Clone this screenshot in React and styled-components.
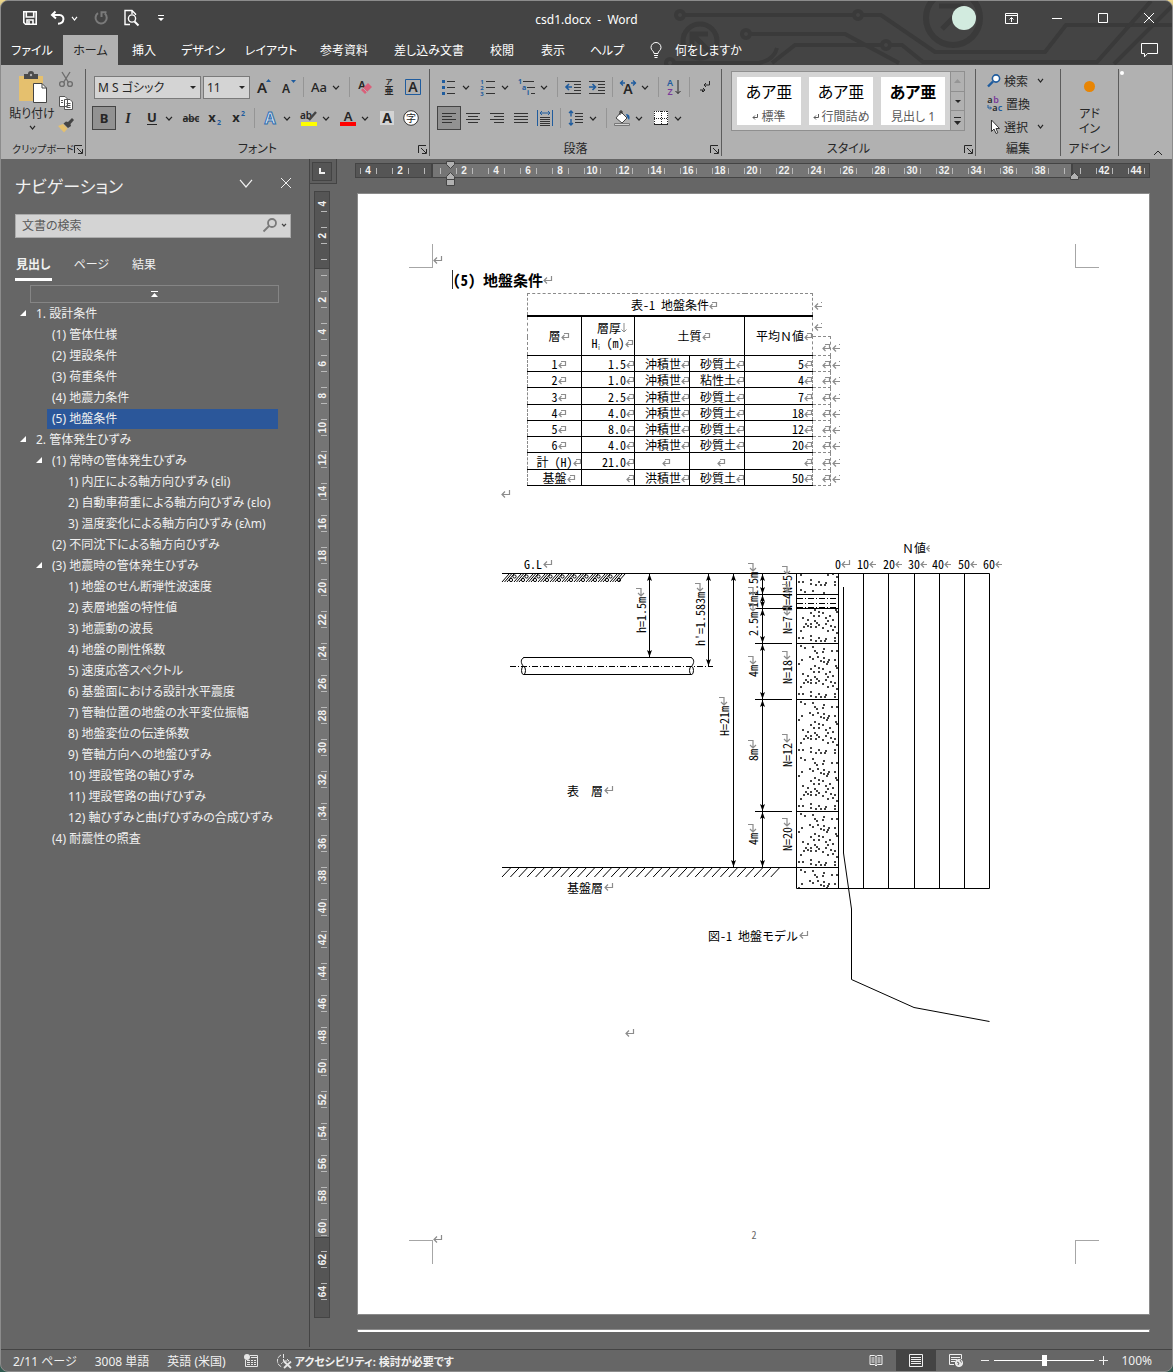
import { Fragment } from 'react'
import styled, { createGlobalStyle, css } from 'styled-components'

const GlobalStyle = createGlobalStyle`
    * { box-sizing: border-box; }
    body {
        margin: 0;
        background: linear-gradient(180deg, #f0d98a 0, #8a8a8a 20px, #8a8a8a 95%, #2f5a50 100%);
        font-family: 'Noto Sans', 'Noto Sans CJK JP', sans-serif;
        font-size: 12px;
        font-feature-settings: 'palt';
    }
    button, input, select {
        font: inherit;
        font-feature-settings: inherit;
        color: inherit;
        margin: 0;
        padding: 0;
        border: 0;
        background: none;
    }
    a { color: inherit; text-decoration: none; }
    svg { display: block; flex: none; overflow: visible; }
`

/* ---------- window and title bar ---------- */

const Window = styled.div`
    display: flex;
    flex-direction: column;
    min-height: 100vh;
    border: 1px solid #8c8c8c;
    border-radius: 8px;
    overflow: hidden;
    background: #666666;
    color: #f0f0f0;
`

const Header = styled.header`
    position: relative;
    background: #444444;
    color: #ffffff;
`

const Circuit = styled.svg`
    position: absolute;
    top: 0;
    right: 0;
    overflow: hidden;
    pointer-events: none;
`

const TitleBar = styled.div`
    position: relative;
    display: grid;
    grid-template-columns: 1fr auto 1fr;
    align-items: center;
    height: 34px;
`

const QuickAccess = styled.div`
    display: flex;
    align-items: center;
    padding-left: 20px;
`

const TitleButton = styled.button`
    display: flex;
    align-items: center;
    justify-content: center;
    gap: 5px;
    width: ${p => p.$w || 24}px;
    height: 30px;
`

const DocTitle = styled.div`
    white-space: pre;
    line-height: 16px;
    padding-top: 3px;
`

const WindowButtons = styled.div`
    display: flex;
    justify-content: flex-end;
    align-items: center;
`

const Avatar = styled.div`
    width: 24px;
    height: 24px;
    margin-right: 12px;
    border-radius: 50%;
    background: #d2ebdf;
`

const TabBar = styled.nav`
    position: relative;
    display: flex;
    height: 30px;
`

const RibbonTab = styled.a`
    display: flex;
    align-items: center;
    justify-content: center;
    width: ${p => p.$w}px;
    white-space: nowrap;
    ${p => p.$active && css`
        background: #b1b1b1;
        color: #262626;
    `}
`

const TellMe = styled.button`
    display: flex;
    align-items: center;
    gap: 13px;
    margin-left: 14px;
`

const CommentButton = styled.button`
    margin-left: auto;
    padding: 0 14px;
`

/* ---------- ribbon ---------- */

const Ribbon = styled.div`
    display: flex;
    height: 94px;
    padding: 4px 0 3px;
    background: #b1b1b1;
    color: #262626;
`

const Group = styled.section`
    display: flex;
    flex-direction: column;
    justify-content: space-between;
    width: ${p => p.$w}px;
    ${p => p.$grow && 'flex: 1;'}
    border-right: 1px solid #5c5c5c;
`

const GroupBody = styled.div`
    display: flex;
    flex-direction: ${p => p.$dir || 'column'};
    padding: ${p => p.$pad || '7px 0 0 7px'};
    gap: ${p => p.$gap || 0}px;
`

const GroupFoot = styled.div`
    display: grid;
    grid-template-columns: 1fr auto 1fr;
    align-items: center;
    line-height: 14px;
    height: 14px;
    padding: 0 2px;
    font-size: ${p => p.$small ? 10 : 12}px;
    white-space: nowrap;
`

const Launcher = styled.button`
    justify-self: end;
`

const ToolRow = styled.div`
    display: flex;
    align-items: center;
    height: 24px;
    padding-left: ${p => p.$inset || 0}px;
`

const Tool = styled.button`
    display: flex;
    align-items: center;
    justify-content: center;
    width: 24px;
    height: 24px;
    ${p => p.$active && css`
        background: #929292;
        border: 1px solid #444444;
    `}
`

const SplitTool = styled.button`
    display: grid;
    grid-template-columns: 18px 16px;
    justify-items: center;
    align-items: center;
    width: 39px;
    height: 24px;
    padding-left: 3px;
`

const Sep = styled.span`
    width: 1px;
    height: 20px;
    margin: 0 3px;
    background: #959595;
`

const SelectBox = styled.label`
    position: relative;
    width: ${p => p.$w}px;
    height: 23px;
    margin-right: 2px;
    border: 1px solid #7a7a7a;
    background: #d4d4d4;
    svg {
        position: absolute;
        right: 4px;
        top: 9px;
        pointer-events: none;
    }
    select {
        appearance: none;
        width: 100%;
        height: 21px;
        padding-left: 3px;
    }
`

const Paste = styled.button`
    display: flex;
    flex-direction: column;
    align-items: center;
    width: 50px;
    line-height: 16px;
    gap: 3px;
    white-space: nowrap;
`

const SmallStack = styled.div`
    display: flex;
    flex-direction: column;
    gap: 7px;
`

const Gallery = styled.div`
    display: flex;
    height: 60px;
    border: 1px solid #8f8f8f;
    background: #d4d4d4;
`

const Cards = styled.div`
    display: flex;
    gap: 8px;
    padding: 5px;
`

const StyleCard = styled.button`
    display: flex;
    flex-direction: column;
    align-items: center;
    justify-content: space-between;
    width: 64px;
    height: 48px;
    padding: 4px 0 1px;
    background: #ffffff;
    color: #000000;
    strong {
        font-size: 16px;
        line-height: 22px;
        font-weight: ${p => p.$bold ? 700 : 400};
    }
    span {
        display: flex;
        align-items: center;
        gap: 3px;
        color: #5a5a5a;
        line-height: 14px;
        white-space: nowrap;
    }
`

const GalleryScroll = styled.div`
    display: flex;
    flex-direction: column;
    width: 14px;
    border-left: 1px solid #8f8f8f;
    background: #b1b1b1;
    button {
        display: flex;
        flex: 1;
        align-items: center;
        justify-content: center;
    }
    button + button { border-top: 1px solid #8f8f8f; }
`

const EditRow = styled.button`
    display: flex;
    align-items: center;
    gap: 3px;
    height: 23px;
    svg:last-child:not(:first-child) { margin-left: 6px; }
`

const AddIn = styled.button`
    display: flex;
    flex-direction: column;
    align-items: center;
    flex: 1;
    line-height: 15px;
    gap: 14px;
    i {
        width: 11px;
        height: 11px;
        border-radius: 50%;
        background: #e88504;
    }
`

const RibbonEnd = styled.div`
    display: flex;
    flex-direction: column;
    justify-content: space-between;
    width: 53px;
    i {
        width: 4px;
        height: 4px;
        margin: 2px 0 0 1px;
        border-radius: 50%;
        background: #ffffff;
    }
    button { align-self: flex-end; margin-right: 9px; }
`

/* ---------- navigation pane ---------- */

const Workspace = styled.div`
    display: flex;
    flex: 1;
`

const NavPane = styled.aside`
    width: 309px;
    margin-bottom: 2px;
    padding: 13px 18px 0 14px;
    border-right: 1px solid #444444;
`

const NavHead = styled.div`
    display: flex;
    align-items: center;
    h2 {
        flex: 1;
        margin: 0;
        font-size: 17px;
        font-weight: 400;
        line-height: 30px;
    }
    button { padding: 0 0 8px; margin-left: 28px; }
`

const SearchBox = styled.div`
    display: flex;
    align-items: center;
    gap: 3px;
    height: 24px;
    margin-top: 12px;
    padding: 0 3px 2px 6px;
    border: 1px solid #ababab;
    background: #d4d4d4;
    color: #444444;
    input {
        flex: 1;
        min-width: 0;
        outline: none;
    }
    input::placeholder { color: #5a5a5a; opacity: 1; }
`

const NavTabs = styled.div`
    display: flex;
    gap: 21px;
    margin-top: 17px;
`

const NavTab = styled.button`
    height: 26px;
    padding: 0 1px 4px;
    border-bottom: 3px solid ${p => p.$active ? '#ffffff' : 'transparent'};
    font-weight: ${p => p.$active ? 700 : 400};
    line-height: 16px;
`

const JumpTop = styled.button`
    display: flex;
    align-items: center;
    justify-content: center;
    width: 249px;
    height: 18px;
    margin: 4px 0 0 15px;
    border: 1px solid #858585;
`

const Tree = styled.ul`
    margin: 0;
    padding: 0;
    list-style: none;
`

const TreeItem = styled.li`
    display: flex;
    align-items: center;
    height: 21px;
    padding-left: ${p => p.$level * 16 - 11}px;
    margin-right: 13px;
    white-space: nowrap;
    svg { width: 11px; }
    a {
        flex: 1;
        margin-left: ${p => p.$open ? 0 : 11}px;
        padding-left: 5px;
        line-height: 20px;
        ${p => p.$selected && 'background: #2b579a;'}
    }
`

/* ---------- rulers and paper ---------- */

const DocArea = styled.main`
    display: flex;
    flex-direction: column;
    flex: 1;
    min-width: 0;
`

const RulerRow = styled.div`
    display: flex;
    align-items: flex-start;
`

const TabSelector = styled.button`
    width: 27px;
    height: 25px;
    padding: 2px;
    border: solid #444444;
    border-width: 0 1px 1px 0;
    background: #5e5e5e;
    span {
        display: flex;
        align-items: center;
        justify-content: center;
        width: 20px;
        height: 19px;
        border: 1px solid #444444;
        background: #555555;
    }
`

const HRuler = styled.div`
    position: relative;
    flex: 1;
    display: flex;
    height: 15px;
    min-width: 0;
    margin: 4px 22px 0 18px;
    padding-left: 4px;
    border: 1px solid #444444;
    background: linear-gradient(90deg, #555555 75px, #444444 75px, #444444 77px, #757575 77px,
        #757575 calc(100% - 78px), #444444 calc(100% - 78px), #444444 calc(100% - 76px), #555555 calc(100% - 76px));
`

const Marker = styled.svg`
    position: absolute;
    top: -3px;
    ${p => p.$right ? 'right: 70px;' : 'left: 90px;'}
`

const HCell = styled.span`
    display: flex;
    flex: none;
    align-items: center;
    justify-content: center;
    width: 16px;
    height: 13px;
    background: linear-gradient(#b9b9b9, #b9b9b9) 0 4px / 1px 6px no-repeat;
    font: bold 10px 'Liberation Sans', sans-serif;
`

const Desk = styled.div`
    display: flex;
    align-items: flex-start;
    flex: 1;
`

const VRuler = styled.div`
    width: 16px;
    margin: 7px 27px 0 4px;
    padding: 4px 0 17px;
    border: 1px solid #444444;
    background: linear-gradient(180deg, #555555 76px, #444444 76px, #444444 77px, #757575 77px,
        #757575 calc(100% - 80px), #444444 calc(100% - 80px), #444444 calc(100% - 79px), #555555 calc(100% - 79px));
`

const VCell = styled.span`
    display: flex;
    align-items: center;
    justify-content: center;
    width: 14px;
    height: 16px;
    background: linear-gradient(#b9b9b9, #b9b9b9) 6px 100% / 6px 1px no-repeat;
    font: bold 10px 'Liberation Sans', sans-serif;
    writing-mode: vertical-rl;
    b { transform: rotate(180deg); }
`

const Pages = styled.div`
    display: flex;
    flex-direction: column;
    align-self: stretch;
    flex: 1;
    min-width: 0;
    margin: 9px 22px 17px 0;
`

const Paper = styled.article`
    display: flex;
    flex-direction: column;
    flex: 1;
    padding: 50px 50px 50px 51px;
    border: 1px solid #8a8a8a;
    background: #ffffff;
    color: #000000;
    font-family: 'Noto Sans CJK JP', sans-serif;
    font-feature-settings: 'hwid';
`

const NextPaper = styled.div`
    height: 3px;
    margin-top: 14px;
    border: solid #8a8a8a;
    border-width: 1px 1px 0;
    background: #ffffff;
`

const MarginRow = styled.div`
    display: flex;
    align-items: ${p => p.$bottom ? 'flex-end' : 'center'};
    justify-content: space-between;
    ${p => p.$bottom && 'margin-top: auto;'}
`

const Corner = styled.span`
    width: 24px;
    height: 24px;
    border: solid #a6a6a6;
    border-width: ${p => p.$edges};
`

const MarginSide = styled.span`
    display: flex;
    align-items: ${p => p.$top ? 'flex-start' : 'center'};
    width: 48px;
    ${p => p.$end && 'justify-content: flex-end;'}
    svg { margin-top: ${p => p.$top ? -5 : 8}px; }
`

const PageNumber = styled.span`
    padding-bottom: 22px;
    color: #666666;
    font-size: 10px;
    line-height: 14px;
`

const SectionTitle = styled.h1`
    display: flex;
    align-items: center;
    margin: 2px 0 0 43px;
    border-left: 1px solid #333333;
    font-size: 15px;
    font-weight: 700;
    line-height: 19px;
    height: 19px;
`

const Paragraph = styled.p`
    display: flex;
    margin: ${p => p.$m};
`

const SoilTable = styled.table`
    margin: 4px 0 0 118px;
    width: 315px;
    border-collapse: collapse;
    table-layout: fixed;
    line-height: 15px;
    th, td {
        height: 16px;
        padding: 0;
        font-weight: 400;
        border: 1px solid #000000;
        text-align: center;
        white-space: nowrap;
    }
    th, td.mid { padding-left: 8px; }
    th svg, td svg { display: inline-block; }
    sub { font-size: 6px; vertical-align: -2px; line-height: 6px; }
    tr > :first-child { border-left: 1px dashed #8a8a8a; }
    tr.tall td { height: 17px; }
    tr td.num { text-align: right; }
    tr .last { border-right: 1px dashed #8a8a8a; }
    tr th.last { padding-left: 0; text-align: right; font-feature-settings: normal; }
    tr td.side { border: 1px dashed #8a8a8a; text-align: right; }
    tr td.mark { border: 0; padding-left: 1px; text-align: left; }
    tr .title {
        height: 22px;
        border: 1px dashed #8a8a8a;
        border-bottom: 2px solid #000000;
    }
    tr td.gap { height: 21px; }
    tr td.short { height: 19px; }
`

const Figure = styled.svg`
    width: 520px;
    height: 484px;
    margin: 41px 0 0 89px;
    text { font-size: 12px; fill: #000000; white-space: pre; }
    text.wide { font-feature-settings: normal; }
`

/* ---------- status bar ---------- */

const StatusBar = styled.footer`
    display: flex;
    align-items: center;
    height: 22px;
    padding: 0 20px 0 12px;
    border-top: 1px solid #444444;
    white-space: nowrap;
    span { padding-right: 18px; }
    b { margin-left: 3px; font-size: 11px; font-weight: 700; }
`

const StatusTools = styled.div`
    display: flex;
    align-items: center;
    align-self: stretch;
    margin-left: auto;
`

const ViewButton = styled.button`
    display: flex;
    align-items: center;
    justify-content: center;
    width: 40px;
    align-self: stretch;
    background: ${p => p.$active ? '#444444' : 'none'};
`

const ZoomButton = styled.button`
    width: 18px;
    display: flex;
    justify-content: center;
`

const Zoom = styled.input`
    appearance: none;
    width: 100px;
    height: 20px;
    &::-webkit-slider-runnable-track { height: 1px; background: #ffffff; }
    &::-webkit-slider-thumb {
        appearance: none;
        width: 5px;
        height: 11px;
        margin-top: -5px;
        background: #ffffff;
    }
`

const ZoomLabel = styled.button`
    margin-left: 9px;
`

/* ---------- small drawings ---------- */

const Svg = ({ w = 16, h = 16, children, ...rest }) => (
    <svg width={w} height={h} viewBox={`0 0 ${w} ${h}`} fill="none" stroke="currentColor" aria-hidden="true" {...rest}>{children}</svg>
)

const Chevron = ({ w = 8, h = 5, ...rest }) => <Svg w={w} h={h} strokeWidth="1.2" {...rest}><path d={`M1 .8L${w / 2} ${h - 1}L${w - 1} .8`} /></Svg>

const Caret = ({ up, bar, color = 'currentColor' }) => (
    <Svg w={bar || up ? 7 : 6} h={bar ? 8 : up ? 4 : 3} stroke="none" fill={color}>
        {bar && <path d="M0 0H7V1H0Z" />}
        <path d={up ? 'M0 4L3.5 0L7 4Z' : bar ? 'M0 4L3.5 8L7 4Z' : 'M0 0L3 3L6 0Z'} />
    </Svg>
)

const Return = () => <Svg w={9} h={8} stroke="#8c8c8c" strokeWidth="1.2"><path d="M8.5 0V4.5H1M4 1.5L1 4.5L4 7.5" /></Svg>
const CellMark = () => <Svg w={8} h={9} stroke="#8c8c8c" strokeWidth="1.2"><path d="M3 1.5H7.5V5.5H1M3.5 3L1 5.5L3.5 8" /></Svg>
const RowMark = () => <Svg w={8} h={8} stroke="#8c8c8c" strokeWidth="1.2"><path d="M8 4.5H1M4 1.5L1 4.5L4 7.5M7 .5H8" /></Svg>
const LineMark = () => <Svg w={6} h={10} stroke="#8c8c8c"><path d="M3 0V9M.5 6.5L3 9L5.5 6.5" /></Svg>

const Letter = ({ x = 8, y = 13, size = 14, weight = 400, fill = '#262626', children, ...rest }) => (
    <text x={x} y={y} fontSize={size} fontWeight={weight} fill={fill} stroke="none" textAnchor="middle" {...rest}>{children}</text>
)

const LauncherIcon = () => <Svg w={9} h={9}><path d="M.5 8V.5H8M3 3L8 8M8.5 4V8.5H4" /></Svg>

const Lines = ({ rows, stroke = '#333333' }) => <path stroke={stroke} d={rows.map(([y, a, b]) => `M${a} ${y}.5H${b}`).join('')} />

const blue = '#1f5c9e'

const Save = () => <Svg strokeWidth="1.6"><path d="M1.8 1.8H14.2V14.2H3.5L1.8 12.5ZM4.3 2V7H11.7V2M5 14V10H11V14M7 11V14" /></Svg>
const Undo = () => <Svg strokeWidth="2"><path d="M5.5 1.5L2 5L6 8.5M2.5 5H9.5C15 5 15 13.5 8 13.8" /></Svg>
const Redo = () => <Svg stroke="#7a7a7a" strokeWidth="2"><path d="M5 3.2A5.6 5.6 0 1 0 11.8 3.6M8.5 7V2.2H13.5" /></Svg>
const Preview = () => <Svg w={17} h={18} strokeWidth="1.4"><path d="M7 15.5H2V1.5H9L12.5 5V6M9 1.5V5" /><circle cx="9" cy="9.5" r="3.6" /><path d="M11.5 12.5L15.5 16.5" strokeWidth="2" /></Svg>
const RibbonOptions = () => <Svg w={13} h={11}><path d="M.5 .5H12.5V10.5H.5ZM.5 2.5H12.5M6.5 9V4.5M4.5 6.5L6.5 4.5L8.5 6.5" /></Svg>
const Bulb = () => <Svg w={12} h={17}><path d="M4 11.5C4 9 1 8.5 1 5.5A5 5 0 0 1 11 5.5C11 8.5 8 9 8 11.5ZM4 13.5H8M4.5 15.5H7.5" /></Svg>
const Comment = () => <Svg w={17} h={15}><path d="M.5 .5H16.5V10.5H6.5L3.5 13.8V10.5H.5Z" /></Svg>

const PasteIcon = () => (
    <Svg w={29} h={31} stroke="none">
        <path d="M1 4H25V29H1Z" fill="#e5c06e" />
        <path d="M6 2H10A3 3 0 0 1 16 2H20V7H6Z" fill="#4b4b4b" />
        <circle cx="13" cy="3" r="1.2" fill="#b1b1b1" />
        <path d="M15.5 11.5H24L28.5 16V30.5H15.5Z" fill="#ffffff" stroke="#444444" />
        <path d="M24 11.5V16H28.5" stroke="#444444" />
    </Svg>
)
const Cut = () => <Svg stroke="#6e6e6e" strokeWidth="1.4"><path d="M4 0L10.5 10.5M12 0L5.5 10.5" /><circle cx="4" cy="12" r="2.4" /><circle cx="12" cy="12" r="2.4" /></Svg>
const Copy = () => <Svg fill="#ffffff" stroke="#555555"><path d="M1.5 1.5H7L9.5 4V11.5H1.5ZM6.5 4.5H12L14.5 7V14.5H6.5Z" /><path d="M3 5.5H5M3 7.5H5M8.5 8.5H12.5M8.5 10.5H12.5M8.5 12.5H12.5" /></Svg>
const Painter = () => <Svg stroke="none"><path d="M10 4L14 0L16 2L12.5 6L13 8L10 10L5.5 5.5L8 3.5Z" fill="#444444" /><path d="M5 6L9.5 10.5L6 14.5L0 8Z" fill="#e5c06e" /></Svg>

const GrowFont = () => <Svg w={18}><Letter x={7} y={14} size={15} weight={600}>A</Letter><path d="M11 3L13.5 0L16 3Z" fill={blue} stroke="none" /></Svg>
const ShrinkFont = () => <Svg w={18}><Letter x={7} y={14} size={12} weight={600}>A</Letter><path d="M12 1H17L14.5 4Z" fill={blue} stroke="none" /></Svg>
const ChangeCase = () => <Svg w={18}><Letter x={9} y={13} size={13} weight={500}>Aa</Letter></Svg>
const ClearFormat = () => <Svg><Letter x={5} y={10} size={11} weight={600}>A</Letter><path d="M4 11L11 4L15 8L8 15Z" fill="#d9607a" stroke="none" /><path d="M6 9L10 13" stroke="#b1b1b1" /></Svg>
const Ruby = () => <Svg h={18}><Letter y={6} size={7} weight={700}>ア</Letter><Letter y={16} size={9} weight={700}>亜</Letter></Svg>
const BoxedA = () => <Svg><path d="M.5 .5H15.5V15.5H.5Z" stroke={blue} /><Letter weight={600}>A</Letter></Svg>
const ShadedA = () => <Svg><path d="M1 1H15V15H1Z" fill="#d4d4d4" stroke="none" /><Letter weight={700}>A</Letter></Svg>
const Enclosed = () => <Svg><circle cx="8" cy="8" r="7.3" fill="#ffffff" stroke="#333333" /><Letter y={12} size={10}>字</Letter></Svg>
const Underline = () => <Svg><Letter y={12} size={13} weight={700}>U</Letter><path d="M3 14.5H13" stroke="#262626" /></Svg>
const Strike = () => <Svg w={18}><Letter x={9} y={12} size={10} weight={600}>abc</Letter><path d="M1 9H17" stroke="#262626" /></Svg>
const Script = ({ sup }) => <Svg><Letter x={5} y={12} size={13} weight={700}>x</Letter><Letter x={12} y={sup ? 6 : 15} size={7} weight={700} fill={blue}>2</Letter></Svg>
const Effects = () => <Svg><Letter y={14} size={16} weight={700} fill="#d8e4f0" style={{ stroke: '#2e6eb0' }}>A</Letter></Svg>
const Highlight = () => <Svg><Letter x={5} y={9} size={10} weight={600}>ab</Letter><path d="M15 2L8 10" stroke="#444444" strokeWidth="2.4" /><path d="M0 12H16V16H0Z" fill="#ffff00" stroke="none" /></Svg>
const FontColor = () => <Svg><Letter y={11} size={13} weight={600}>A</Letter><path d="M0 12H16V16H0Z" fill="#ff0000" stroke="none" /></Svg>

const Bullets = () => <Svg><Lines rows={[[2, 6, 14], [8, 6, 14], [14, 6, 14]]} /><path d="M1 1H4V4H1ZM1 7H4V10H1ZM1 13H4V16H1Z" fill={blue} stroke="none" /></Svg>
const Numbering = () => <Svg><Lines rows={[[2, 6, 15], [8, 6, 15], [14, 6, 15]]} /><Letter x={2} y={5} size={6} fill={blue} weight={700}>1</Letter><Letter x={2} y={11} size={6} fill={blue} weight={700}>2</Letter><Letter x={2} y={17} size={6} fill={blue} weight={700}>3</Letter></Svg>
const Multilevel = () => <Svg w={18}><Lines rows={[[2, 5, 16], [8, 9, 17], [14, 13, 17]]} /><Letter x={2} y={5} size={7} fill={blue} weight={700}>1</Letter><Letter x={6} y={11} size={7} fill={blue} weight={700}>a</Letter><Letter x={10} y={16} size={7} fill={blue} weight={700}>i</Letter></Svg>
const Indent = ({ out }) => <Svg><Lines rows={[[2, 0, 16], [5, 9, 16], [8, 9, 16], [11, 9, 16], [14, 0, 16]]} /><path stroke={blue} strokeWidth="1.6" d={out ? 'M7 8H1M4 5L1 8L4 11' : 'M0 8H6M3.5 5L6.5 8L3.5 11'} /></Svg>
const AsianLayout = () => <Svg><Letter y={15} size={14} weight={600}>A</Letter><path stroke={blue} strokeWidth="1.3" d="M0 4H5M3 1.5L.5 4L3 6.5M11 4H16M13 1.5L15.5 4L13 6.5" /></Svg>
const Sort = () => <Svg><Letter x={4} y={7} size={9} weight={600} fill={blue}>A</Letter><Letter x={4} y={16} size={9} weight={600} fill="#7a3a9a">Z</Letter><path d="M12 1V14.5M9.5 12L12 14.5L14.5 12" /></Svg>
const ShowMarks = () => <Svg><path d="M12.5 2V6H7M9 4L7 6L9 8M3 11H8M6 9L8 11L6 13M5.5 11V13" /></Svg>
const Align = ({ rows }) => <Svg><Lines rows={rows} /></Svg>
const Distribute = () => <Svg><Lines rows={[[7, 3, 13], [9, 3, 13], [11, 3, 13], [13, 3, 13], [15, 3, 13]]} /><path stroke={blue} d="M.5 0V16M15.5 0V16M3 3H13M5 1L3 3L5 5M11 1L13 3L11 5" /></Svg>
const LineSpacing = () => <Svg><Lines rows={[[3, 7, 15], [6, 7, 15], [9, 7, 15], [12, 7, 15]]} /><path stroke={blue} d="M3 1V6.5M1 3L3 1L5 3M3 9V15M1 13L3 15L5 13" strokeWidth="1.4" /></Svg>
const Shading = () => <Svg><path d="M7 2L13 8L8 13L2 8Z" fill="#ffffff" stroke="#444444" /><path d="M6 5V1H8V4" /><path d="M12 4C16 4 16 8 15 10L13 7Z" fill={blue} stroke="none" /><path d="M.5 13.5H15.5V15.5H.5Z" fill="#d4d4d4" stroke="#777777" /></Svg>
const Borders = () => <Svg w={14} h={14}><path d="M0 0H14V14H0Z" fill="#ffffff" stroke="none" /><path d="M.5 0V14M13.5 0V14M7.5 0V14M0 .5H14M0 7.5H14" strokeDasharray="1 1" /><path d="M0 13.5H14" /></Svg>

const Find = () => <Svg w={14} h={14} stroke={blue}><circle cx="9" cy="4.5" r="3.6" fill="#ffffff" strokeWidth="1.6" /><path d="M6 7.5L1 12.5" strokeWidth="2.4" /></Svg>
const Replace = () => <Svg><Letter x={3} y={7} size={9} weight={600}>a</Letter><Letter x={9} y={7} size={9} weight={600} fill="#7a3a9a">b</Letter><Letter x={8} y={15} size={9} weight={600}>a</Letter><Letter x={13} y={15} size={9} weight={600} fill={blue}>c</Letter><path stroke={blue} d="M1 9V12H4M3 10.5L4.5 12L3 13.5" /></Svg>
const Pointer = () => <Svg w={14} h={16}><path d="M4.5 1V12.5L7 10L9 14.5L10.8 13.8L9 9.5H12.5Z" fill="#ffffff" stroke="#333333" /></Svg>

const Magnifier = () => <Svg stroke="#7a7a7a" strokeWidth="1.8"><circle cx="10" cy="6" r="4" /><path d="M7 9L1.5 14.5" /></Svg>
const Expanded = () => <Svg w={11} h={7} stroke="none" fill="#ffffff"><path d="M6 0V6H0Z" /></Svg>

const Macro = () => <Svg w={14} h={13} stroke="#e6e6e6"><path d="M6 1.5H13.5V12.5H1.5V6" /><circle cx="3" cy="3" r="3" fill="#e6e6e6" stroke="none" /><path d="M7 3.5H13M3 6.5H6M7 6.5H9M10 6.5H12M3 8.5H6M7 8.5H9M10 8.5H12M3 10.5H6M7 10.5H9M10 10.5H12" /></Svg>
const Access = () => <Svg w={16} h={16} stroke="#e6e6e6"><path d="M5 2A6.5 6.5 0 0 0 6 14M7.5 1V8.5L5 11M7.5 8H13M11 6L13 8" strokeDasharray="4 1" /><path d="M8 8.5L15 15M15 8.5L8 15" strokeWidth="1.8" /></Svg>
const ReadMode = () => <Svg w={14} h={13}><path d="M1 1.5H5.5L7 2.5L8.5 1.5H13V10.5H8.5L7 12L5.5 10.5H1ZM7 2V12M2.5 4H5.5M2.5 6H5.5M2.5 8H5.5M8.5 4H11.5M8.5 6H11.5M8.5 8H11.5" /></Svg>
const PrintLayout = () => <Svg w={14} h={13}><path d="M.5 .5H13.5V12.5H.5ZM2 3.5H12M2 5.5H12M2 7.5H12M2 9.5H12" /></Svg>
const WebLayout = () => <Svg w={15} h={14}><path d="M12.5 5V.5H.5V10.5H5M2 3.5H11M2 5.5H8M2 7.5H6" /><circle cx="10" cy="9" r="3.6" fill="#e6e6e6" /><path d="M8 8L10 9L9 11M11 6L12.5 8.5" stroke="#666666" /></Svg>

/* ---------- soil model figure ---------- */

// one tile of the sand texture
const SAND = [
    [3, 2], [7, 4], [15, 3], [17, 7], [19, 9], [25, 8], [26, 5], [34, 7], [39, 7], [1, 20], [4, 16], [12, 13], [15, 15],
    [20, 13], [23, 17], [26, 14], [26, 18], [30, 18], [31, 16], [29, 20], [37, 16], [38, 22], [39, 24], [17, 22], [21, 24],
    [13, 25], [5, 30], [10, 32], [16, 28], [17, 33], [19, 35], [21, 28], [25, 25], [28, 30], [32, 28], [30, 33], [28, 36],
    [35, 32], [8, 36], [10, 38], [13, 39], [13, 36], [18, 39], [21, 37], [6, 39], [33, 38], [37, 39], [25, 40], [30, 43],
    [35, 42], [3, 43], [1, 50], [5, 50], [13, 48], [13, 52], [18, 53], [21, 50], [23, 53], [27, 53], [28, 51], [37, 50],
    [37, 53], [39, 45],
]

const AXIS = [[835, '0'], [857, '10'], [883, '20'], [908, '30'], [932, '40'], [958, '50'], [983, '60']]

// rotated labels: baseline x, bottom y, text
const UPRIGHT = [
    [646, 634, 'h=1.5m'], [705, 647, "h'=1.583m"], [729, 737, 'H=21m'],
    [758, 597, '1.5m'], [758, 609, '1m'], [758, 637, '2.5m'], [758, 678, '4m'], [758, 762, '8m'], [758, 846, '4m'],
    [792, 594, 'N=5'], [792, 612, 'N=4'], [792, 635, 'N=7'], [792, 685, 'N=18'], [792, 768, 'N=12'], [792, 852, 'N=20'],
]

const DIMS = [
    [649.5, 575, 658], [708.5, 575, 667], [733.5, 575, 868],
    [762.5, 575, 595], [762.5, 596, 609], [762.5, 610, 644], [762.5, 645, 700], [762.5, 701, 812], [762.5, 813, 868],
]

const range = n => Array.from({ length: n }, (_, i) => i)

const FigMark = ({ x, y }) => <path d={`M${x + 8.5} ${y}v4.5h-7.5m3 -3l-3 3l3 3`} stroke="#8c8c8c" strokeWidth="1.2" />

const SoilFigure = () => (
    <Figure viewBox="498 540 520 484" fill="none" stroke="#000000">
        <defs>
            <pattern id="sand" x="797" y="644" width="42" height="56" patternUnits="userSpaceOnUse">
                {SAND.map(([x, y]) => <rect key={`${x}-${y}`} x={x} y={y} width="2" height="2" fill="#444444" stroke="none" />)}
            </pattern>
        </defs>
        <path d="M797 575H838V595H797ZM797 610H838V889H797Z" fill="url(#sand)" stroke="none" />
        <path d="M797 599.5H838M797 604.5H838M797 608.5H838" strokeDasharray="6 2 1 2" />
        <path d="M502 574.5H989.5V889.5H796.5V574.5M502 868.5H838.5" />
        <path d="M838.5 574V889M863.5 574V889M888.5 574V889M914.5 574V889M939.5 574V889M964.5 574V889" />
        <path d="M755 595.5H792M755 609.5H792M755 644.5H792M755 700.5H792M755 812.5H792" />
        <path d="M797 595.5H838M797 609.5H838M797 644.5H838M797 700.5H838M797 812.5H838" />
        <path d="M843.5 588V854L851.5 910V980.5L914 1008.5L989.5 1022.5" />
        {DIMS.map(([x, a, b]) => (
            <Fragment key={`${x}-${a}`}>
                <path d={`M${x} ${a}V${b}`} />
                <path d={`M${x} ${a}l-2.5 7l2.5 -1.5l2.5 1.5ZM${x} ${b}l-2.5 -7l2.5 1.5l2.5 -1.5Z`} fill="#000000" stroke="none" />
            </Fragment>
        ))}
        {range(10).map(i => {
            const x = 502 + i * 12
            return (
                <Fragment key={i}>
                    <path d={`M${x} 583l7 -8M${x + 2.5} 583l7 -8M${x + 5} 583l7 -8${i === 9 ? `M${x + 8} 583l7 -8` : ''}`} />
                    <circle cx={x + 9} cy={581} r="1.6" />
                    {i < 9 && <circle cx={x + 12.5} cy={577.5} r="1.6" />}
                </Fragment>
            )
        })}
        {range(33).map(i => <path key={i} d={`M${502 + i * 8.4} 878l8.5 -9`} />)}
        <path d="M523.5 658.5H691.5M523.5 675.5H691.5" />
        <path d="M510 667.5H713" strokeDasharray="6 2 1 2" />
        <path d="M524 658.5C520.5 660 520.5 664 523.5 667.5M691 658.5C694.5 660 694.5 664 691.5 667.5" />
        <ellipse cx="523.5" cy="671.5" rx="2" ry="4" />
        <ellipse cx="691.5" cy="671.5" rx="2" ry="4" />
        <g stroke="none">
            <text x="524" y="570">G.L</text>
            <text x="567" y="797" className="wide">表　層</text>
            <text x="567" y="894">基盤層</text>
            <text x="902" y="554" className="wide">Ｎ値</text>
            <text x="708" y="942">図-1 地盤モデル</text>
            {AXIS.map(([x, label]) => <text key={label} x={x} y="570">{label}</text>)}
            {UPRIGHT.map(([x, y, label]) => <text key={`${x}-${y}`} transform={`translate(${x} ${y}) rotate(-90)`}>{label}</text>)}
        </g>
        <FigMark x={543} y={561} />
        <FigMark x={604} y={787} />
        <FigMark x={604} y={884} />
        <FigMark x={799} y={932} />
        <FigMark x={841} y={561} />
        <path d="M930 549.5h-3.5m3 -3l-3 3l3 3" stroke="#8c8c8c" strokeWidth="1.2" />
        {AXIS.slice(1).map(([x, label]) => <path key={label} d={`M${x + 19} 565.5h-6m3 -3l-3 3l3 3`} stroke="#8c8c8c" strokeWidth="1.2" />)}
        {UPRIGHT.map(([x, y, label]) => (
            <path key={`${x}-${y}`} d={`M${x - 10} ${y - label.length * 6 - 8.5}h5v7.5m-3 -3l3 3l3 -3`} stroke="#8c8c8c" strokeWidth="1.2" />
        ))}
    </Figure>
)

/* ---------- page data ---------- */

const TABS = [
    ['ファイル', 62], ['ホーム', 55], ['挿入', 52], ['デザイン', 66], ['レイアウト', 70], ['参考資料', 76],
    ['差し込み文書', 94], ['校閲', 52], ['表示', 50], ['ヘルプ', 58],
]

const OUTLINE = [
    [1, '1. 設計条件', true],
    [2, '(1) 管体仕様'],
    [2, '(2) 埋設条件'],
    [2, '(3) 荷重条件'],
    [2, '(4) 地震力条件'],
    [2, '(5) 地盤条件'],
    [1, '2. 管体発生ひずみ', true],
    [2, '(1) 常時の管体発生ひずみ', true],
    [3, '1) 内圧による軸方向ひずみ (εli)'],
    [3, '2) 自動車荷重による軸方向ひずみ (εlo)'],
    [3, '3) 温度変化による軸方向ひずみ (ελm)'],
    [2, '(2) 不同沈下による軸方向ひずみ'],
    [2, '(3) 地震時の管体発生ひずみ', true],
    [3, '1) 地盤のせん断弾性波速度'],
    [3, '2) 表層地盤の特性値'],
    [3, '3) 地震動の波長'],
    [3, '4) 地盤の剛性係数'],
    [3, '5) 速度応答スペクトル'],
    [3, '6) 基盤面における設計水平震度'],
    [3, '7) 管軸位置の地盤の水平変位振幅'],
    [3, '8) 地盤変位の伝達係数'],
    [3, '9) 管軸方向への地盤ひずみ'],
    [3, '10) 埋設管路の軸ひずみ'],
    [3, '11) 埋設管路の曲げひずみ'],
    [3, '12) 軸ひずみと曲げひずみの合成ひずみ'],
    [2, '(4) 耐震性の照査'],
]

const LAYERS = [
    ['1', '1.5', '沖積世', '砂質土', '5'],
    ['2', '1.0', '沖積世', '粘性土', '4'],
    ['3', '2.5', '沖積世', '砂質土', '7'],
    ['4', '4.0', '沖積世', '砂質土', '18'],
    ['5', '8.0', '沖積世', '砂質土', '12'],
    ['6', '4.0', '沖積世', '砂質土', '20'],
    ['計 (H)', '21.0', '', '', ''],
    ['基盤', '', '洪積世', '砂質土', '50'],
]

const cellClass = (cell, c) => {
    if (c === 0) return 'mid'
    if (c === 4) return 'num last'
    return c === 1 || cell ? 'num' : 'mid'
}

const scale = (from, to, hidden) => {
    const cells = []
    for (let n = from; n <= to; n++) {
        cells.push(n % 2 === 0 && !hidden.includes(n) ? Math.abs(n) : '')
    }
    return cells
}

const Split = ({ label, children }) => <SplitTool aria-label={label}>{children}<Chevron /></SplitTool>

const Foot = ({ children, launcher, small }) => (
    <GroupFoot $small={small}><span />{children}{launcher && <Launcher aria-label="詳細設定"><LauncherIcon /></Launcher>}</GroupFoot>
)

const TopBar = () => (
    <Header>
        <Circuit width="520" height="64" viewBox="653 1 520 64" fill="none" stroke="#3a3a3a" strokeWidth="4" aria-hidden="true">
            <circle cx="681" cy="15" r="4" /><circle cx="747" cy="34" r="4" /><circle cx="859" cy="15" r="4" />
            <circle cx="887" cy="45" r="4" /><circle cx="671" cy="63" r="4" />
            <circle cx="701" cy="41" r="17" strokeWidth="5" />
            <path d="M693 50V34H709M694 35L710 51" strokeWidth="5" />
            <circle cx="954" cy="18" r="27" strokeWidth="6" />
            <path d="M940 6H962V10L943 29" strokeWidth="5" />
            <path d="M686 15H855M863 15H882L936 52H1046L1067 25H1173" />
            <path d="M752 34H846L900 63M773 63L796 45H883M891 45H903L924 62H1098L1152 1M1115 64L1173 6" />
            <path d="M676 63H760Q775 60 778 48" />
        </Circuit>
        <TitleBar>
            <QuickAccess>
                <TitleButton $w={18} aria-label="上書き保存"><Save /></TitleButton>
                <TitleButton $w={50} aria-label="元に戻す"><Undo /><Chevron w={7} /></TitleButton>
                <TitleButton aria-label="やり直し"><Redo /></TitleButton>
                <TitleButton $w={36} aria-label="印刷プレビュー"><Preview /></TitleButton>
                <TitleButton aria-label="クイックアクセスのカスタマイズ"><Svg w={6} h={6} stroke="none" fill="#ffffff"><path d="M0 0H6V1H0ZM0 3H6L3 6Z" /></Svg></TitleButton>
            </QuickAccess>
            <DocTitle>csd1.docx  -  Word</DocTitle>
            <WindowButtons>
                <Avatar />
                <TitleButton $w={46} aria-label="リボンの表示オプション"><RibbonOptions /></TitleButton>
                <TitleButton $w={46} aria-label="最小化"><Svg w={10} h={11}><path d="M0 5.5H10" /></Svg></TitleButton>
                <TitleButton $w={46} aria-label="最大化"><Svg w={10} h={10}><path d="M.5 .5H9.5V9.5H.5Z" /></Svg></TitleButton>
                <TitleButton $w={46} aria-label="閉じる"><Svg w={10} h={10}><path d="M0 0L10 10M10 0L0 10" /></Svg></TitleButton>
            </WindowButtons>
        </TitleBar>
        <TabBar>
            {TABS.map(([name, w]) => <RibbonTab key={name} href="#" $w={w} $active={name === 'ホーム'}>{name}</RibbonTab>)}
            <TellMe><Bulb />何をしますか</TellMe>
            <CommentButton aria-label="コメント"><Comment /></CommentButton>
        </TabBar>
    </Header>
)

const HomeRibbon = () => (
    <Ribbon>
        <Group $w={85}>
            <GroupBody $dir="row" $pad="3px 0 0 6px" $gap={1}>
                <Paste><PasteIcon /><span>貼り付け</span><Chevron w={7} /></Paste>
                <SmallStack><Cut /><Copy /><Painter /></SmallStack>
            </GroupBody>
            <Foot launcher small>クリップボード</Foot>
        </Group>
        <Group $w={344}>
            <GroupBody $gap={7} $pad="6px 0 0 6px">
                <ToolRow $inset={2}>
                    <SelectBox $w={107}>
                        <select aria-label="フォント"><option>M S ゴシック</option></select><Caret />
                    </SelectBox>
                    <SelectBox $w={47}>
                        <select aria-label="フォント サイズ"><option>11</option></select><Caret />
                    </SelectBox>
                    <Tool aria-label="拡大"><GrowFont /></Tool>
                    <Tool aria-label="縮小"><ShrinkFont /></Tool>
                    <Sep />
                    <Split label="文字種の変換"><ChangeCase /></Split>
                    <Sep />
                    <Tool aria-label="書式のクリア"><ClearFormat /></Tool>
                    <Tool aria-label="ルビ"><Ruby /></Tool>
                    <Tool aria-label="囲み線"><BoxedA /></Tool>
                </ToolRow>
                <ToolRow>
                    <Tool $active aria-label="太字"><Svg><Letter size={13} weight={700}>B</Letter></Svg></Tool>
                    <Tool aria-label="斜体"><Svg><Letter size={14} fontStyle="italic" fontFamily="Liberation Serif" weight={700}>I</Letter></Svg></Tool>
                    <Split label="下線"><Underline /></Split>
                    <Tool aria-label="取り消し線"><Strike /></Tool>
                    <Tool aria-label="下付き"><Script /></Tool>
                    <Tool aria-label="上付き"><Script sup /></Tool>
                    <Sep />
                    <Split label="文字の効果"><Effects /></Split>
                    <Split label="蛍光ペン"><Highlight /></Split>
                    <Split label="フォントの色"><FontColor /></Split>
                    <Tool aria-label="文字の網かけ"><ShadedA /></Tool>
                    <Tool aria-label="囲い文字"><Enclosed /></Tool>
                </ToolRow>
            </GroupBody>
            <Foot launcher>フォント</Foot>
        </Group>
        <Group $w={292}>
            <GroupBody $gap={7} $pad="6px 0 0 7px">
                <ToolRow>
                    <Split label="箇条書き"><Bullets /></Split>
                    <Split label="段落番号"><Numbering /></Split>
                    <Split label="アウトライン"><Multilevel /></Split>
                    <Sep />
                    <Tool aria-label="インデントを減らす"><Indent out /></Tool>
                    <Tool aria-label="インデントを増やす"><Indent /></Tool>
                    <Sep />
                    <Split label="拡張書式"><AsianLayout /></Split>
                    <Sep />
                    <Tool aria-label="並べ替え"><Sort /></Tool>
                    <Sep />
                    <Tool aria-label="編集記号"><ShowMarks /></Tool>
                </ToolRow>
                <ToolRow>
                    <Tool $active aria-label="左揃え"><Align rows={[[3, 1, 15], [6, 1, 11], [9, 1, 15], [12, 1, 11]]} /></Tool>
                    <Tool aria-label="中央揃え"><Align rows={[[3, 1, 15], [6, 3, 13], [9, 1, 15], [12, 3, 13]]} /></Tool>
                    <Tool aria-label="右揃え"><Align rows={[[3, 1, 15], [6, 5, 15], [9, 1, 15], [12, 5, 15]]} /></Tool>
                    <Tool aria-label="両端揃え"><Align rows={[[3, 1, 15], [6, 1, 15], [9, 1, 15], [12, 1, 15]]} /></Tool>
                    <Tool aria-label="均等割り付け"><Distribute /></Tool>
                    <Sep />
                    <Split label="行間"><LineSpacing /></Split>
                    <Sep />
                    <Split label="塗りつぶし"><Shading /></Split>
                    <Split label="罫線"><Borders /></Split>
                </ToolRow>
            </GroupBody>
            <Foot launcher>段落</Foot>
        </Group>
        <Group $grow>
            <GroupBody $dir="row" $pad="2px 0 0 9px">
                <Gallery>
                    <Cards>
                        <StyleCard><strong>あア亜</strong><span><Svg w={6} h={6}><path d="M5.5 0V3.5H1M3 1.5L1 3.5L3 5.5" /></Svg>標準</span></StyleCard>
                        <StyleCard><strong>あア亜</strong><span><Svg w={6} h={6}><path d="M5.5 0V3.5H1M3 1.5L1 3.5L3 5.5" /></Svg>行間詰め</span></StyleCard>
                        <StyleCard $bold><strong>あア亜</strong><span>見出し 1</span></StyleCard>
                    </Cards>
                    <GalleryScroll>
                        <button aria-label="上へ"><Caret up color="#959595" /></button>
                        <button aria-label="下へ"><Caret /></button>
                        <button aria-label="その他"><Caret bar /></button>
                    </GalleryScroll>
                </Gallery>
            </GroupBody>
            <Foot launcher>スタイル</Foot>
        </Group>
        <Group $w={85}>
            <GroupBody $pad="0 0 0 11px">
                <EditRow><Find />検索<Chevron w={7} /></EditRow>
                <EditRow><Replace /><span>置換</span></EditRow>
                <EditRow><Pointer />選択<Chevron w={7} /></EditRow>
            </GroupBody>
            <Foot>編集</Foot>
        </Group>
        <Group $w={58}>
            <GroupBody $dir="row" $pad="12px 0 0 0">
                <AddIn><i /><span>アド<br />イン</span></AddIn>
            </GroupBody>
            <Foot>アドイン</Foot>
        </Group>
        <RibbonEnd><i /><button aria-label="リボンを折りたたむ"><Svg w={10} h={6}><path d="M1 5L5 1L9 5" /></Svg></button></RibbonEnd>
    </Ribbon>
)

const Navigation = () => (
    <NavPane>
        <NavHead>
            <h2>ナビゲーション</h2>
            <button aria-label="オプション"><Chevron w={14} h={9} /></button>
            <button aria-label="閉じる"><Svg w={10} h={10}><path d="M0 0L10 10M10 0L0 10" /></Svg></button>
        </NavHead>
        <SearchBox>
            <input type="text" placeholder="文書の検索" aria-label="文書の検索" />
            <Magnifier /><Chevron w={6} h={4} />
        </SearchBox>
        <NavTabs>
            <NavTab $active>見出し</NavTab><NavTab>ページ</NavTab><NavTab>結果</NavTab>
        </NavTabs>
        <JumpTop aria-label="先頭へ"><Svg w={7} h={6} stroke="none" fill="#ffffff"><path d="M0 0H7V1H0ZM0 6L3.5 2L7 6Z" /></Svg></JumpTop>
        <Tree>
            {OUTLINE.map(([level, text, open], i) => (
                <TreeItem key={i} $level={level} $open={open} $selected={i === 5}>
                    {open && <Expanded />}
                    <a href="#">{text}</a>
                </TreeItem>
            ))}
        </Tree>
    </NavPane>
)

const Conditions = () => (
    <SoilTable>
        <colgroup>
            {[54, 53, 55, 55, 68, 18, 12].map((w, i) => <col key={i} style={{ width: w }} />)}
        </colgroup>
        <thead>
            <tr><th colSpan={5} className="title">表-1 地盤条件<CellMark /></th><td className="mark"><RowMark /></td><td className="mark" /></tr>
            <tr>
                <th rowSpan={2}>層<CellMark /></th>
                <th rowSpan={2}>層厚<LineMark /><br />H<sub>i</sub> (m)<CellMark /></th>
                <th rowSpan={2} colSpan={2}>土質<CellMark /></th>
                <th rowSpan={2} className="last">平均Ｎ値<CellMark /></th>
                <td className="mark gap"><RowMark /></td><td className="mark gap" />
            </tr>
            <tr><td className="side short"><CellMark /></td><td className="mark"><RowMark /></td></tr>
        </thead>
        <tbody>
            {LAYERS.map((row, r) => (
                <tr key={r} className={r === 2 || r === 6 ? 'tall' : ''}>
                    {row.map((cell, c) => <td key={c} className={cellClass(cell, c)}>{cell}<CellMark /></td>)}
                    <td className="side"><CellMark /></td>
                    <td className="mark"><RowMark /></td>
                </tr>
            ))}
        </tbody>
    </SoilTable>
)

const Document = () => (
    <DocArea>
        <RulerRow>
            <TabSelector aria-label="タブの種類"><span><Svg w={6} h={6} strokeWidth="2"><path d="M1 0V5H6" /></Svg></span></TabSelector>
            <HRuler>
                {scale(-4, 45, [0, 40]).map((n, i) => <HCell key={i}>{n}</HCell>)}
                <Marker width="9" height="25" fill="#b1b1b1" stroke="#444444">
                    <path d="M.5 .5H8.5V3.5L4.5 7.5L.5 3.5ZM.5 18.5V15.5L4.5 11.5L8.5 15.5V24.5H.5V18.5H8.5" />
                </Marker>
                <Marker $right width="9" height="19" fill="#b1b1b1" stroke="#444444">
                    <path d="M.5 18.5V15.5L4.5 11.5L8.5 15.5V18.5Z" />
                </Marker>
            </HRuler>
        </RulerRow>
        <Desk>
            <VRuler>
                {scale(-4, 64, [0]).map((n, i) => <VCell key={i}><b>{n}</b></VCell>)}
            </VRuler>
            <Pages>
                <Paper>
                    <MarginRow>
                        <MarginSide><Corner $edges="0 1px 1px 0" /><Return /></MarginSide>
                        <Corner $edges="0 0 1px 1px" />
                    </MarginRow>
                    <SectionTitle>(5) 地盤条件<Return /></SectionTitle>
                    <Conditions />
                    <Paragraph $m="4px 0 0 92px"><Return /></Paragraph>
                    <SoilFigure />
                    <Paragraph $m="6px 0 0 216px"><Return /></Paragraph>
                    <MarginRow $bottom>
                        <MarginSide $top><Corner $edges="1px 1px 0 0" /><Return /></MarginSide>
                        <PageNumber>2</PageNumber>
                        <MarginSide $end><Corner $edges="1px 0 0 1px" /></MarginSide>
                    </MarginRow>
                </Paper>
                <NextPaper />
            </Pages>
        </Desk>
    </DocArea>
)

const App = () => (
    <>
        <GlobalStyle />
        <Window>
            <TopBar />
            <HomeRibbon />
            <Workspace>
                <Navigation />
                <Document />
            </Workspace>
            <StatusBar>
                <span>2/11 ページ</span>
                <span>3008 単語</span>
                <span>英語 (米国)</span>
                <span><Macro /></span>
                <Access />
                <b>アクセシビリティ: 検討が必要です</b>
                <StatusTools>
                    <ViewButton aria-label="閲覧モード"><ReadMode /></ViewButton>
                    <ViewButton $active aria-label="印刷レイアウト"><PrintLayout /></ViewButton>
                    <ViewButton aria-label="Web レイアウト"><WebLayout /></ViewButton>
                    <ZoomButton aria-label="縮小"><Svg w={8} h={9}><path d="M0 4.5H8" /></Svg></ZoomButton>
                    <Zoom type="range" min="0" max="200" defaultValue="100" aria-label="ズーム" />
                    <ZoomButton aria-label="拡大"><Svg w={9} h={9}><path d="M0 4.5H9M4.5 0V9" /></Svg></ZoomButton>
                    <ZoomLabel>100%</ZoomLabel>
                </StatusTools>
            </StatusBar>
        </Window>
    </>
)

export default App
